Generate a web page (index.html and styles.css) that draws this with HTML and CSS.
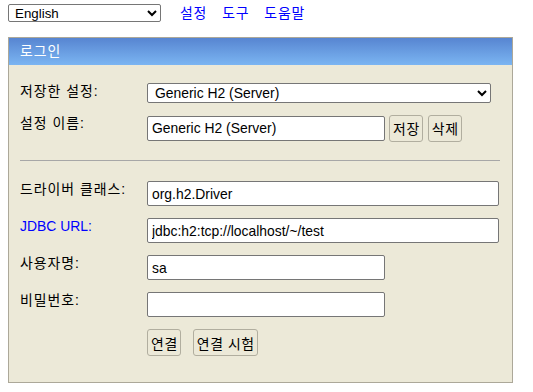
FILE: index.html
```html
<!DOCTYPE html>
<html lang="ko">
<head>
<meta charset="utf-8">
<title>H2 Console</title>
<link rel="stylesheet" href="styles.css">
</head>
<body>
<div class="topbar">
  <select class="lang">
    <option>English</option>
  </select>
  <nav class="links">
    <a href="#">설정</a>
    <a href="#">도구</a>
    <a href="#">도움말</a>
  </nav>
</div>
<div class="panel">
  <div class="panel-head">로그인</div>
  <div class="panel-body">
    <div class="row row-first">
      <div class="label">저장한 설정:</div>
      <select class="field sel-setting">
        <option>Generic H2 (Server)</option>
      </select>
    </div>
    <div class="row row-name">
      <div class="label label-name">설정 이름:</div>
      <div class="inline">
        <input class="field short" type="text" value="Generic H2 (Server)">
        <button class="btn">저장</button>
        <button class="btn">삭제</button>
      </div>
    </div>
    <div class="divider"></div>
    <div class="row">
      <div class="label">드라이버 클래스:</div>
      <input class="field long" type="text" value="org.h2.Driver">
    </div>
    <div class="row">
      <div class="label link-label">JDBC URL:</div>
      <input class="field long" type="text" value="jdbc:h2:tcp://localhost/~/test">
    </div>
    <div class="row">
      <div class="label">사용자명:</div>
      <input class="field short" type="text" value="sa">
    </div>
    <div class="row">
      <div class="label">비밀번호:</div>
      <input class="field short" type="password" value="">
    </div>
    <div class="row row-buttons">
      <div class="label"></div>
      <div class="inline buttons">
        <button class="btn">연결</button>
        <button class="btn">연결 시험</button>
      </div>
    </div>
  </div>
</div>
</body>
</html>
```
FILE: styles.css
```css
html, body {
  background: #ffffff;
}
body {
  margin: 0;
  padding: 4px 8px;
  font-family: "Liberation Sans", "Noto Sans CJK KR", sans-serif;
  font-size: 13.9px;
  color: #000000;
}
.topbar {
  display: flex;
  align-items: center;
  height: 18px;
  margin-bottom: 15px;
}
.lang {
  width: 153px;
  height: 18px;
  font-family: "Liberation Sans", "Noto Sans CJK KR", sans-serif;
  font-size: 13.33px;
  padding: 0 0 0 2px;
  border: 1px solid #767676;
  border-radius: 2px;
  background: #ffffff;
  color: #000;
}
.links {
  display: flex;
  gap: 15px;
  margin-left: 19px;
  line-height: 18px;
  letter-spacing: 0.8px;
}
.links a {
  color: #0000ff;
  text-decoration: none;
}
.panel {
  width: 505px;
  box-sizing: border-box;
  border: 1px solid #aca899;
  background: #ece9d8;
}
.panel-head {
  height: 27px;
  line-height: 26px;
  padding-left: 11px;
  color: #ffffff;
  letter-spacing: 1px;
  background: linear-gradient(to bottom, #5785d1, #7bb5f2);
}
.panel-body {
  padding: 18px 12px 26px 11px;
}
.row {
  display: flex;
  align-items: flex-start;
  margin-bottom: 12px;
}
.row-first {
  margin-bottom: 11px;
}
.row-name {
  margin-bottom: 18px;
}
.row-buttons {
  margin-bottom: 0;
}
.label {
  width: 127px;
  flex: none;
  line-height: 16px;
  letter-spacing: 1px;
}
.label-name {
  padding-top: 1px;
}
.link-label {
  color: #0000ff;
  letter-spacing: 0;
}
.field {
  box-sizing: border-box;
  height: 25px;
  border: 1px solid #767676;
  border-radius: 2px;
  background: #ffffff;
  font-family: "Liberation Sans", "Noto Sans CJK KR", sans-serif;
  font-size: 13.9px;
  color: #000;
  padding: 0 4px;
  margin: 0;
}
.sel-setting {
  width: 344px;
  height: 20px;
  padding: 0 0 0 3px;
}
.long {
  width: 352px;
}
.short {
  width: 238px;
}
.inline {
  display: flex;
  align-items: center;
  height: 28px;
}
.inline .btn {
  margin-left: 4px;
}
.inline .btn + .btn {
  margin-left: 5px;
}
.buttons {
  height: 27px;
}
.buttons .btn {
  margin-left: 0;
}
.buttons .btn + .btn {
  margin-left: 12px;
}
.btn {
  box-sizing: border-box;
  height: 27px;
  padding: 0 2px 0 3px;
  border: 1px solid #b1ae9f;
  border-radius: 3px;
  background: #ece9d8;
  font-family: "Liberation Sans", "Noto Sans CJK KR", sans-serif;
  font-size: 13.9px;
  letter-spacing: 0.6px;
  color: #000;
}
.divider {
  height: 0;
  border-top: 1px solid #a7a7a7;
  margin: 0 0 20px 0;
}
```
